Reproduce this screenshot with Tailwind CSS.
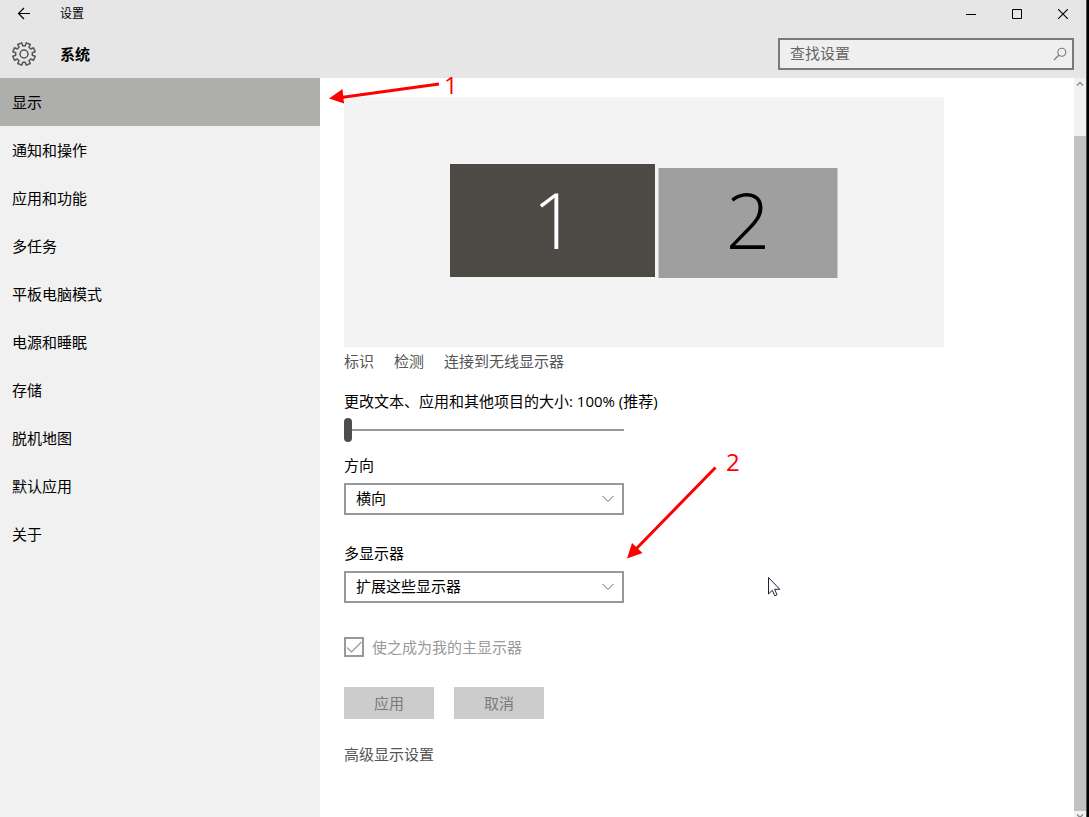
<!DOCTYPE html>
<html lang="zh-CN">
  <head>
    <meta charset="UTF-8" />
    <meta name="viewport" content="width=device-width, initial-scale=1.0" />
    <title>设置</title>
    <script src="https://cdn.jsdelivr.net/npm/@tailwindcss/browser@4"></script>
  </head>
  <body class="relative flex h-screen flex-col overflow-hidden border-r-2 border-black bg-white font-['Open_Sans','Noto_Sans_CJK_SC',sans-serif] text-[15px] leading-5 text-black">

    <header class="border-r border-[#555] bg-[#e6e6e6]">
      <div class="flex h-7 items-center">
        <button class="flex h-7 w-12 items-center justify-center" aria-label="返回">
          <svg class="size-4" viewBox="0 0 16 16" fill="none" stroke="#000" stroke-width="1.2"><path d="M14 7.500H2.500M8 2L2.500 7.500L8 13" /></svg>
        </button>
        <span class="ml-3 grow text-xs">设置</span>
        <button class="flex h-7 w-[46px] items-center justify-center" aria-label="最小化">
          <svg class="size-[10px]" viewBox="0 0 10 10" stroke="#000"><path d="M0 5.5H10" /></svg>
        </button>
        <button class="flex h-7 w-[46px] items-center justify-center" aria-label="最大化">
          <svg class="size-[10px]" viewBox="0 0 10 10" fill="none" stroke="#000"><path d="M.5 .5H9.5V9.5H.5Z" /></svg>
        </button>
        <button class="flex h-7 w-[46px] items-center justify-center" aria-label="关闭">
          <svg class="size-[10px]" viewBox="0 0 10 10" stroke="#000" stroke-width="1.1"><path d="M0 0L10 10M10 0L0 10" /></svg>
        </button>
      </div>
      <div class="flex h-[50px] items-start pl-3 pr-3">
        <svg class="mt-[14px] size-6" viewBox="0 0 24 24" fill="none" stroke="#555" stroke-width="1.5" stroke-linejoin="round">
          <path id="gear" />
          <circle cx="12" cy="12" r="4" />
        </svg>
        <h1 class="ml-6 mt-4 grow font-bold">系统</h1>
        <div class="relative mt-[10px] w-[296px]">
          <input type="text" aria-label="查找设置" placeholder="查找设置" class="block h-8 w-full border-2 border-[#7a7a7a] bg-[#efefef] pb-[2px] pl-[10px] pr-8 outline-none placeholder:text-[#666]" />
          <svg class="absolute right-[6px] top-2 size-4" viewBox="0 0 16 16" fill="none" stroke="#777" stroke-width="1.1"><circle cx="9.8" cy="6.2" r="4" /><path d="M7 9L2 14" /></svg>
        </div>
      </div>
    </header>

    <div class="flex min-h-0 grow">
      <nav class="w-80 shrink-0 bg-[#f1f1f1]">
        <a href="#" class="flex h-12 items-center bg-[#aeaeac] pl-3">显示</a>
        <a href="#" class="flex h-12 items-center pl-3">通知和操作</a>
        <a href="#" class="flex h-12 items-center pl-3">应用和功能</a>
        <a href="#" class="flex h-12 items-center pl-3">多任务</a>
        <a href="#" class="flex h-12 items-center pl-3">平板电脑模式</a>
        <a href="#" class="flex h-12 items-center pl-3">电源和睡眠</a>
        <a href="#" class="flex h-12 items-center pl-3">存储</a>
        <a href="#" class="flex h-12 items-center pl-3">脱机地图</a>
        <a href="#" class="flex h-12 items-center pl-3">默认应用</a>
        <a href="#" class="flex h-12 items-center pl-3">关于</a>
      </nav>

      <main class="min-w-0 grow overflow-hidden pl-6 pt-[19px]">
        <!-- monitor arrangement -->
        <div class="relative h-[250px] w-full max-w-[600px] bg-[#f3f3f3]">
          <button class="absolute left-[106px] top-[67px] h-[113px] w-[205px] bg-[#4d4945] pb-1 pl-1 text-[78px] font-light leading-none text-white">1</button>
          <button class="absolute left-[314px] top-[71px] h-[110px] w-[180px] border-x border-[#c8c8c8] bg-[#9f9f9f] pb-2 text-[78px] font-light leading-none">2</button>
        </div>
        <div class="flex gap-5 leading-7 text-[#555]">
          <a href="#">标识</a>
          <a href="#">检测</a>
          <a href="#">连接到无线显示器</a>
        </div>

        <label for="scale" class="mt-4 block">更改文本、应用和其他项目的大小: 100% (推荐)</label>
        <input id="scale" type="range" min="0" max="3" value="0" class="mt-[7px] block h-6 w-[280px] appearance-none bg-transparent [&::-webkit-slider-runnable-track]:h-[2px] [&::-webkit-slider-runnable-track]:bg-[#999] [&::-webkit-slider-thumb]:mt-[-11px] [&::-webkit-slider-thumb]:h-6 [&::-webkit-slider-thumb]:w-2 [&::-webkit-slider-thumb]:appearance-none [&::-webkit-slider-thumb]:rounded-full [&::-webkit-slider-thumb]:bg-[#4d4d4b]" />

        <label for="orientation" class="mt-[13px] block">方向</label>
        <div class="relative mt-2 w-[280px]">
          <select id="orientation" class="block h-8 w-full appearance-none border-2 border-[#999] bg-white pb-[2px] pl-[10px]">
            <option>横向</option>
            <option>纵向</option>
          </select>
          <svg class="pointer-events-none absolute right-[10px] top-[10px] size-3" viewBox="0 0 12 12" fill="none" stroke="#666"><path d="M.5 3L6 8.5L11.5 3" /></svg>
        </div>

        <label for="multi" class="mt-7 block">多显示器</label>
        <div class="relative mt-2 w-[280px]">
          <select id="multi" class="block h-8 w-full appearance-none border-2 border-[#999] bg-white pb-[2px] pl-[10px]">
            <option>扩展这些显示器</option>
            <option>复制这些显示器</option>
          </select>
          <svg class="pointer-events-none absolute right-[10px] top-[10px] size-3" viewBox="0 0 12 12" fill="none" stroke="#666"><path d="M.5 3L6 8.5L11.5 3" /></svg>
        </div>

        <label for="primary" class="relative mt-[34px] flex items-center gap-2 text-[#999]">
          <input id="primary" type="checkbox" checked disabled class="size-5 appearance-none border-2 border-[#999]" />
          <svg class="absolute left-0 top-0 size-5" viewBox="0 0 20 20" fill="none" stroke="#999" stroke-width="1.2"><path d="M3 10.5L7.5 15L17.5 5" /></svg>
          使之成为我的主显示器
        </label>

        <div class="mt-[30px] flex gap-5">
          <button disabled class="h-8 w-[90px] bg-[#ccc] text-[#7a7a7a]">应用</button>
          <button disabled class="h-8 w-[90px] bg-[#ccc] text-[#7a7a7a]">取消</button>
        </div>
        <a href="#" class="mt-[25px] inline-block text-[#555]">高级显示设置</a>
      </main>

      <!-- scrollbar -->
      <div class="flex w-[13px] shrink-0 flex-col border-r border-[#555] bg-[#f1f1f1]">
        <svg class="h-3 w-3 shrink-0" viewBox="0 0 12 12" fill="none" stroke="#8a8a8a" stroke-width="1.4"><path d="M3 7.5L6 4.5L9 7.5" /></svg>
        <div class="mt-[46px] grow bg-[#c2c2c2]"></div>
        <svg class="h-[6px] w-3 shrink-0" viewBox="0 0 12 6" fill="none" stroke="#8a8a8a" stroke-width="1.4"><path d="M3 3.5L6 6.5L9 3.5" /></svg>
      </div>
    </div>

    <!-- callouts -->
    <svg class="pointer-events-none absolute left-[329px] top-[78px] h-7 w-28 overflow-visible" viewBox="0 0 112 28" fill="#f00">
      <path d="M110 6L12 19.500" stroke="#f00" stroke-width="3" />
      <path d="M0 20.500L13.500 11L15 25.500Z" />
    </svg>
    <span class="pointer-events-none absolute left-[444px] top-[73px] text-2xl leading-6 text-[#f00]">1</span>
    <svg class="pointer-events-none absolute left-[627px] top-[466px] h-24 w-24 overflow-visible" viewBox="0 0 96 96" fill="#f00">
      <path d="M88.500 1.500L9 83" stroke="#f00" stroke-width="3" />
      <path d="M0 92.500L5 77L15.500 87Z" />
    </svg>
    <span class="pointer-events-none absolute left-[726px] top-[450px] text-2xl leading-6 text-[#f00]">2</span>
    <svg class="pointer-events-none absolute left-[768px] top-[577px] h-5 w-3 overflow-visible" viewBox="0 0 12 20" fill="#fff" stroke="#223">
      <path d="M.5 .5V17L4.300 13.300L6.800 18.800L9 17.800L6.600 12.300H11.800Z" />
    </svg>

    <script>
      // eight-toothed gear outline
      const pts = []
      for (let i = 0; i < 8; i++) {
        const a = (i * 45 + 22.5) * Math.PI / 180
        for (const [r, d] of [[8.4, -0.24], [11.4, -0.19], [11.4, 0.19], [8.4, 0.24]]) {
          pts.push((12 + r * Math.cos(a + d)).toFixed(2) + " " + (12 + r * Math.sin(a + d)).toFixed(2))
        }
      }
      document.getElementById("gear").setAttribute("d", "M" + pts.join("L") + "Z")
    </script>

  </body>
</html>
